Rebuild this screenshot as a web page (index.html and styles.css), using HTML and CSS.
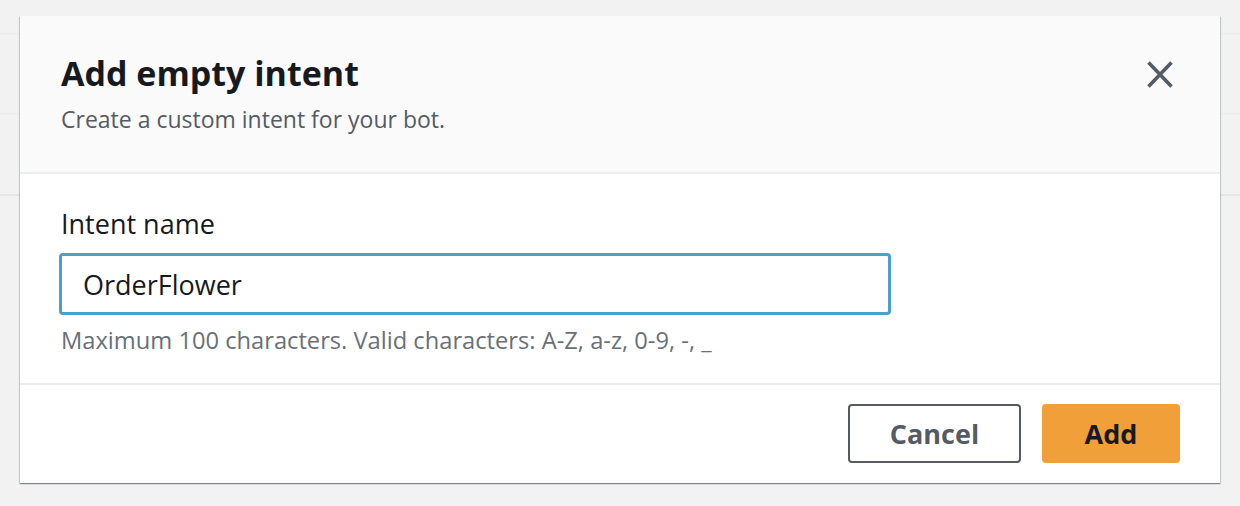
FILE: index.html
```html
<!DOCTYPE html>
<html>
<head>
    <meta charset="UTF-8">
    <title>Add empty intent</title>
    <link rel="stylesheet" href="styles.css">
</head>
<body>
<div class="backdrop">
    <div class="bg-line line-one"></div>
    <div class="bg-line line-two"></div>
    <div class="bg-line line-three"></div>
</div>

<div class="modal">
    <header class="modal-header">
        <div class="titles">
            <h1>Add empty intent</h1>
            <p class="subtitle">Create a custom intent for your bot.</p>
        </div>
        <button class="close" aria-label="Close">
            <svg width="26" height="27" viewBox="0 0 26 27">
                <path d="M1.5 1.5 L24.5 25.5 M24.5 1.5 L1.5 25.5" stroke="#545b64" stroke-width="3.6" fill="none"/>
            </svg>
        </button>
    </header>

    <section class="modal-body">
        <label class="field-label" for="intent">Intent name</label>
        <input class="text-input" id="intent" type="text" value="OrderFlower">
        <p class="hint">Maximum 100 characters. Valid characters: A-Z, a-z, 0-9, -, _</p>
    </section>

    <footer class="modal-footer">
        <button class="btn btn-cancel">Cancel</button>
        <button class="btn btn-primary">Add</button>
    </footer>
</div>
</body>
</html>
```

FILE: styles.css
```css
body {
    margin: 0;
    padding: 16px 20px 0 20px;
    background: #f2f2f2;
    font-family: "Open Sans", "Noto Sans", sans-serif;
    color: #16191f;
    height: 506px;
    box-sizing: border-box;
    overflow: hidden;
}

.backdrop {
    position: absolute;
    left: 0;
    top: 0;
    width: 1240px;
    height: 506px;
}

.bg-line {
    position: absolute;
    left: 0;
    width: 1240px;
    height: 1px;
    background: #ececec;
}

.line-one { top: 33px; }
.line-two { top: 113px; }
.line-three { top: 194px; height: 2px; background: #e6e6e6; }

.modal {
    position: relative;
    width: 1200px;
    background: #fff;
    box-shadow: 0 1px 1px 0 rgba(0, 28, 36, 0.3), 1px 1px 1px 0 rgba(0, 28, 36, 0.15), -1px 1px 1px 0 rgba(0, 28, 36, 0.15);
}

.modal-header {
    display: flex;
    justify-content: space-between;
    align-items: flex-start;
    height: 158px;
    box-sizing: border-box;
    padding: 37px 47px 0 41px;
    background: #fafafa;
    border-bottom: 2px solid #eaeded;
}

h1 {
    margin: 0;
    font-size: 34px;
    line-height: 40px;
    font-weight: 700;
    color: #16191f;
}

.subtitle {
    margin: 11px 0 0 0;
    font-size: 23px;
    line-height: 30px;
    color: #545b64;
}

.close {
    margin-top: 8px;
    padding: 0;
    border: none;
    background: none;
    width: 26px;
    height: 27px;
}

.modal-body {
    height: 211px;
    box-sizing: border-box;
    padding: 33px 41px 0 39px;
    border-bottom: 2px solid #eaeded;
}

.field-label {
    display: block;
    margin-left: 2px;
    font-size: 27px;
    line-height: 34px;
    color: #16191f;
}

.text-input {
    display: block;
    margin-top: 12px;
    width: 832px;
    height: 62px;
    box-sizing: border-box;
    border: 3px solid #4aa1c8;
    border-radius: 4px;
    padding: 0 21px;
    font-family: "Open Sans", "Noto Sans", sans-serif;
    font-size: 27px;
    color: #16191f;
    outline: none;
}

.hint {
    margin: 10px 0 0 2px;
    font-size: 23.7px;
    line-height: 30px;
    color: #687078;
}

.modal-footer {
    display: flex;
    justify-content: flex-end;
    gap: 21px;
    padding: 19px 40px 20px 0;
}

.btn {
    height: 59px;
    box-sizing: border-box;
    border-radius: 4px;
    font-family: "Open Sans", "Noto Sans", sans-serif;
    font-size: 27px;
    font-weight: 700;
}

.btn-cancel {
    width: 173px;
    background: #fff;
    border: 2px solid #545b64;
    color: #545b64;
}

.btn-primary {
    width: 138px;
    background: #f19f39;
    border: none;
    color: #16191f;
}
```
